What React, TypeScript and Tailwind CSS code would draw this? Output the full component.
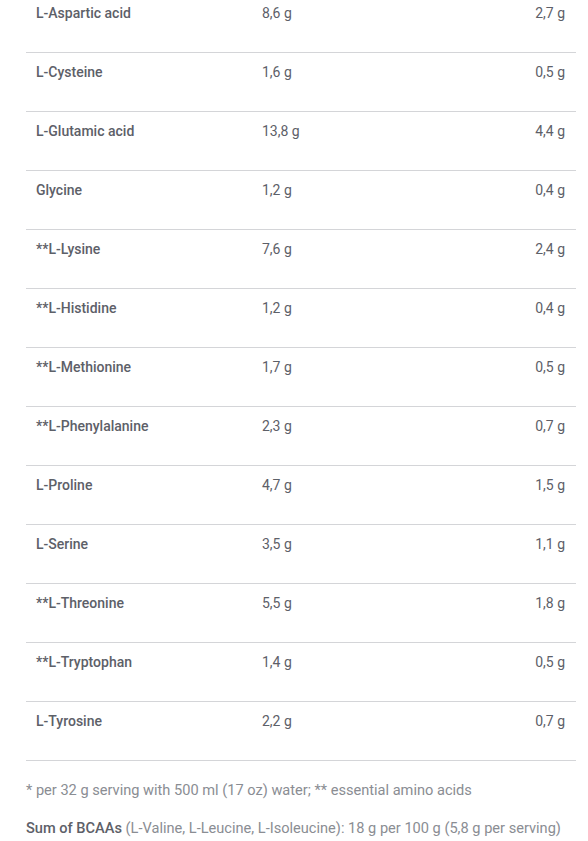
const ROWS: [string, string, string][] = [
  ['L-Aspartic acid', '8,6 g', '2,7 g'],
  ['L-Cysteine', '1,6 g', '0,5 g'],
  ['L-Glutamic acid', '13,8 g', '4,4 g'],
  ['Glycine', '1,2 g', '0,4 g'],
  ['**L-Lysine', '7,6 g', '2,4 g'],
  ['**L-Histidine', '1,2 g', '0,4 g'],
  ['**L-Methionine', '1,7 g', '0,5 g'],
  ['**L-Phenylalanine', '2,3 g', '0,7 g'],
  ['L-Proline', '4,7 g', '1,5 g'],
  ['L-Serine', '3,5 g', '1,1 g'],
  ['**L-Threonine', '5,5 g', '1,8 g'],
  ['**L-Tryptophan', '1,4 g', '0,5 g'],
  ['L-Tyrosine', '2,2 g', '0,7 g'],
];

export default function App() {
  return (
    <div className="w-[588px] h-[841px] overflow-hidden bg-white font-['Roboto',sans-serif] text-[#5d6068]">
      <div className="ml-[26px] w-[550px] -mt-[6px]">
        {ROWS.map(([name, per100, perServing]) => (
          <div key={name} className="flex h-[59px] border-b border-[#d4d5d8] pt-[11px] text-[14px] leading-[16px]">
            <span className="w-[236px] pl-[10px] font-medium">{name}</span>
            <span className="flex-1">{per100}</span>
            <span className="pr-[11px] text-right">{perServing}</span>
          </div>
        ))}
      </div>

      <p className="ml-[26px] mt-[21px] text-[14.6px] leading-[16px] text-[#8a8d93]">
        * per 32 g serving with 500 ml (17 oz) water; ** essential amino acids
      </p>
      <p className="ml-[26px] mt-[22px] text-[14.6px] leading-[16px] text-[#8a8d93]">
        <span className="font-medium text-[#5d6068]">Sum of BCAAs</span> (L-Valine, L-Leucine, L-Isoleucine): 18 g per 100 g (5,8 g per serving)
      </p>
    </div>
  );
}
